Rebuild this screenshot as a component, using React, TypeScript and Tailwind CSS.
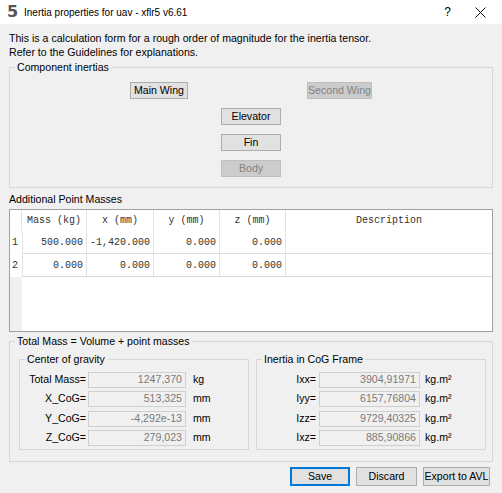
import React from "react";

const sans = { fontFamily: '"Liberation Sans", Arial, sans-serif' };
const mono = { fontFamily: '"Liberation Mono", "Courier New", monospace' };

function Btn({ label, w, disabled }: { label: string; w: number; disabled?: boolean }) {
  return (
    <div
      style={{ width: w }}
      className={
        "h-[17px] flex items-center justify-center border text-[10.6px] leading-none " +
        (disabled ? "bg-[#cccccc] border-[#bfbfbf] text-[#838383]" : "bg-[#e1e1e1] border-[#adadad] text-black")
      }
    >
      {label}
    </div>
  );
}

function Group({ title, children, className }: { title: string; children: React.ReactNode; className?: string }) {
  return (
    <fieldset className={"border border-[#d7d7d7] min-w-0 " + (className || "")}>
      <legend className="ml-[5px] px-[2px] text-[10.6px] leading-[14px] text-black">{title}</legend>
      {children}
    </fieldset>
  );
}

const cols = [65, 67, 66, 66];
const rows = [
  ["500.000", "-1,420.000", "0.000", "0.000"],
  ["0.000", "0.000", "0.000", "0.000"],
];

function Field({ label, value, unit, lw, iw, g1, g2 }: { label: string; value: string; unit: string; lw: number; iw: number; g1: number; g2: number }) {
  return (
    <div className="flex items-center h-[16px]">
      <div style={{ width: lw }} className="text-right text-[10.6px] text-black">{label}</div>
      <div
        style={{ width: iw, marginLeft: g1 }}
        className="h-[16px] border border-[#cfcfcf] bg-[#f0f0f0] flex items-center justify-end pr-[3px] text-[10.6px] text-[#7a7a7a]"
      >
        {value}
      </div>
      <div style={{ marginLeft: g2 }} className="text-[10.6px] text-black">{unit}</div>
    </div>
  );
}

export default function App() {
  return (
    <div style={sans} className="w-[502px] h-[493px] bg-[#f0f0f0] flex flex-col overflow-hidden">
      {/* Title bar */}
      <div className="h-[24px] bg-white flex items-center shrink-0">
        <span className="ml-[7px] w-[14px] text-[16px] font-bold leading-none text-[#555555]" style={{ fontFamily: '"DejaVu Sans", sans-serif' }}>5</span>
        <span className="ml-[3px] text-[10px] text-black">Inertia properties for uav - xflr5 v6.61</span>
        <span className="ml-auto mr-[24px] text-[12px] text-black">?</span>
        <svg width="11" height="11" viewBox="0 0 11 11" className="mr-[16px]">
          <path d="M0.5 0.5 L10.5 10.5 M10.5 0.5 L0.5 10.5" stroke="#111" strokeWidth="1" />
        </svg>
      </div>

      {/* Body */}
      <div className="px-[9px] pt-[7px] flex flex-col">
        <div className="text-[10.6px] leading-[14px] text-black">
          This is a calculation form for a rough order of magnitude for the inertia tensor.
        </div>
        <div className="text-[10.6px] leading-[14px] text-black">Refer to the Guidelines for explanations.</div>

        <Group title="Component inertias" className="mt-[1px] h-[128px]">
          <div className="pt-[8px] flex flex-col items-center gap-[9px]">
            <div className="flex gap-[119px]">
              <Btn label="Main Wing" w={58} />
              <Btn label="Second Wing" w={65} disabled />
            </div>
            <Btn label="Elevator" w={60} />
            <Btn label="Fin" w={60} />
            <Btn label="Body" w={60} disabled />
          </div>
        </Group>

        <div className="mt-[4px] text-[10.6px] leading-[14px] text-black">Additional Point Masses</div>

        {/* Table */}
        <div className="mt-[3px] h-[123px] border border-[#a0a0a0] bg-white flex flex-col" style={mono}>
          <div className="h-[21px] flex">
            <div className="w-[12px] border-r border-[#e3e3e3]" />
            {["Mass (kg)", "x (mm)", "y (mm)", "z (mm)"].map((h, i) => (
              <div key={h} style={{ width: cols[i] }} className="border-r border-[#e3e3e3] flex items-center justify-center text-[10px] text-[#333]">
                {h}
              </div>
            ))}
            <div className="flex-1 flex items-center justify-center text-[10px] text-[#333]">Description</div>
          </div>
          {rows.map((r, ri) => (
            <div key={ri} className="h-[23px] flex">
              <div className="w-[12px] flex items-center pl-[2px] text-[10px] text-[#333]">{ri + 1}</div>
              <div className="flex flex-1 border-b border-[#dcdcdc]">
                <div className="border-l border-[#e3e3e3]" />
                {r.map((v, i) => (
                  <div key={i} style={{ width: i === 0 ? cols[i] - 1 : cols[i] }} className="border-r border-[#e3e3e3] flex items-center justify-end pr-[3px] text-[10px] text-[#333]">
                    {v}
                  </div>
                ))}
                <div className="flex-1" />
              </div>
            </div>
          ))}
          <div className="flex-1 flex">
            <div className="w-[12px] bg-[#f0f0f0]" />
            <div className="flex-1 bg-white" />
          </div>
        </div>

        <Group title="Total Mass = Volume + point masses" className="mt-[2px] h-[128px]">
          <div className="pt-[4px] pl-[9px] pr-[6px] flex gap-[7px]">
            <Group title="Center of gravity" className="w-[230px] h-[98px]">
              <div className="pt-[6px] flex flex-col gap-[3.3px]">
                <Field label="Total Mass=" value="1247,370" unit="kg" lw={66} iw={98} g1={2} g2={7} />
                <Field label="X_CoG=" value="513,325" unit="mm" lw={66} iw={98} g1={2} g2={7} />
                <Field label="Y_CoG=" value="-4,292e-13" unit="mm" lw={66} iw={98} g1={2} g2={7} />
                <Field label="Z_CoG=" value="279,023" unit="mm" lw={66} iw={98} g1={2} g2={7} />
              </div>
            </Group>
            <Group title="Inertia in CoG Frame" className="w-[230px] h-[98px]">
              <div className="pt-[6px] flex flex-col gap-[3.3px]">
                <Field label="Ixx=" value="3904,91971" unit="kg.m²" lw={59} iw={101} g1={3} g2={5} />
                <Field label="Iyy=" value="6157,76804" unit="kg.m²" lw={59} iw={101} g1={3} g2={5} />
                <Field label="Izz=" value="9729,40325" unit="kg.m²" lw={59} iw={101} g1={3} g2={5} />
                <Field label="Ixz=" value="885,90866" unit="kg.m²" lw={59} iw={101} g1={3} g2={5} />
              </div>
            </Group>
          </div>
        </Group>

        {/* Bottom buttons */}
        <div className="mt-[5px] pr-[3px] flex justify-end gap-[6px]">
          <div className="w-[60px] h-[19px] bg-[#e1e1e1] border border-[#0078d7] shadow-[inset_0_0_0_1px_#0078d7] flex items-center justify-center text-[10.6px] text-black">Save</div>
          <div className="w-[61px] h-[19px] bg-[#e1e1e1] border border-[#adadad] flex items-center justify-center text-[10.6px] text-black">Discard</div>
          <div className="w-[67px] h-[19px] bg-[#e1e1e1] border border-[#adadad] flex items-center justify-center text-[10.6px] text-black">Export to AVL</div>
        </div>
      </div>
    </div>
  );
}
